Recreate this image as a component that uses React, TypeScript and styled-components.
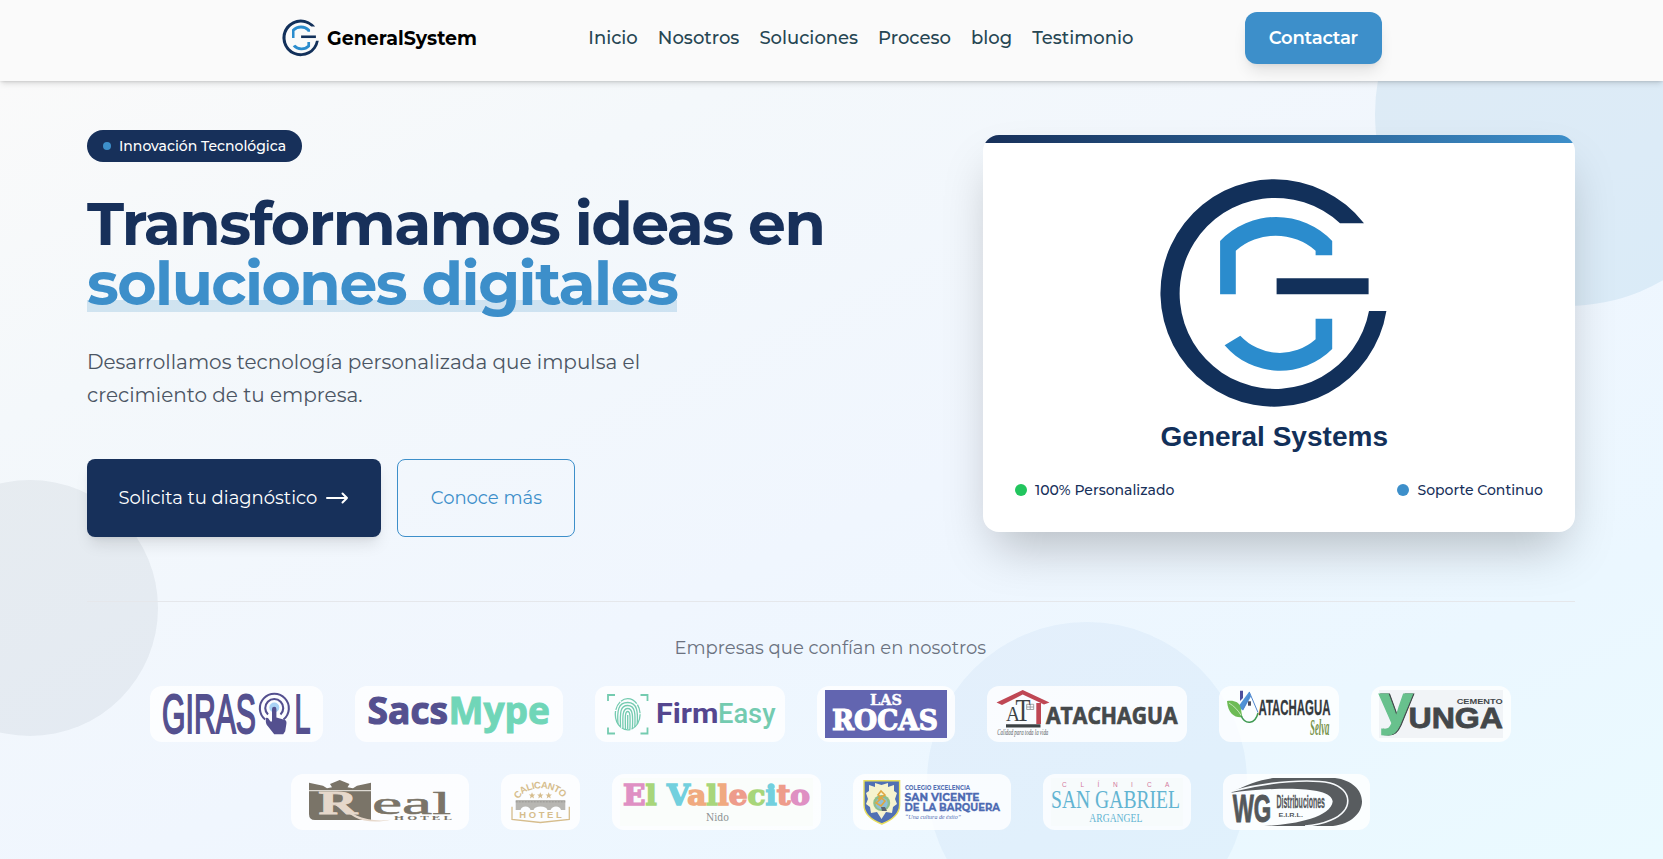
import React from 'react';
import styled, { createGlobalStyle } from 'styled-components';

const navy = '#17305a';
const blue = '#3d8fca';

const GlobalStyle = createGlobalStyle`
  *, *::before, *::after { box-sizing: border-box; }
  body {
    margin: 0;
    overflow: hidden;
    font-family: Montserrat, Inter, sans-serif;
    color: #000;
    background: #fafafa;
  }
  h1, p { margin: 0; }
  a { color: inherit; text-decoration: none; }
  svg { display: block; flex-shrink: 0; overflow: visible; }
`;

const Page = styled.div`
  height: 859px;
  display: flex;
  flex-direction: column;
  overflow: hidden;
`;

const Header = styled.header`
  position: relative;
  z-index: 2;
  height: 81px;
  padding: 12px 0 17px;
  display: flex;
  justify-content: center;
  background: #fafafa;
  box-shadow: 0 4px 6px -1px rgba(0, 0, 0, 0.1), 0 2px 4px -2px rgba(0, 0, 0, 0.1),
    0 1px 2px rgba(0, 0, 0, 0.06);
`;

const HeaderInner = styled.div`
  width: 1101px;
  display: flex;
  align-items: center;
  justify-content: space-between;
`;

const Brand = styled.a`
  display: flex;
  align-items: center;
  gap: 7px;
  padding-left: 1px;
  font-size: 19px;
  font-weight: 700;
`;

const Nav = styled.nav`
  display: flex;
  gap: 20px;
  font-size: 18px;
  font-weight: 500;
  color: #264653;
`;

const ContactButton = styled.a`
  height: 52px;
  padding: 0 24px;
  display: flex;
  align-items: center;
  border-radius: 12px;
  background: ${blue};
  color: #fff;
  font-size: 18px;
  font-weight: 600;
  letter-spacing: -0.2px;
  box-shadow: 0 10px 15px -3px rgba(0, 0, 0, 0.1), 0 4px 6px -4px rgba(0, 0, 0, 0.1);
`;

const Hero = styled.main`
  position: relative;
  z-index: 0;
  flex: 1;
  overflow: hidden;
  padding: 49px 88px 0 87px;
  background: linear-gradient(to bottom right, #fafafa, #f4f8fb 22%, #f0f6fe 54%, #ebf7ff 80%, #eafaff);
`;

const Bubble = styled.span<{ $size: number; $x: number; $y: number; $tint: string }>`
  position: absolute;
  z-index: -2;
  left: ${(p) => p.$x}px;
  top: ${(p) => p.$y}px;
  width: ${(p) => p.$size}px;
  height: ${(p) => p.$size}px;
  border-radius: 50%;
  background: ${(p) => p.$tint};
`;

const Intro = styled.section`
  display: flex;
  align-items: center;
  justify-content: space-between;
`;

const Pitch = styled.div`
  display: flex;
  flex-direction: column;
  align-items: flex-start;
`;

const Badge = styled.div`
  height: 32px;
  padding: 0 16px;
  display: flex;
  align-items: center;
  gap: 8px;
  border-radius: 16px;
  background: ${navy};
  color: #fff;
  font-size: 14px;
  font-weight: 500;
`;

const Dot = styled.span<{ $size: number; $color: string }>`
  width: ${(p) => p.$size}px;
  height: ${(p) => p.$size}px;
  border-radius: 50%;
  background: ${(p) => p.$color};
`;

const Title = styled.h1`
  margin-top: 32px;
  font-size: 60px;
  line-height: 60px;
  font-weight: 700;
  letter-spacing: -0.0255em;
  color: ${navy};
`;

const Highlight = styled.span`
  position: relative;
  color: ${blue};

  &::after {
    content: '';
    position: absolute;
    z-index: -1;
    left: 0;
    right: 0;
    bottom: 8px;
    height: 12px;
    background: rgba(61, 143, 202, 0.2);
  }
`;

const Lead = styled.p`
  width: 576px;
  margin-top: 32px;
  font-size: 20px;
  line-height: 32.5px;
  color: #4b5563;
`;

const Actions = styled.div`
  display: flex;
  gap: 16px;
  margin-top: 48px;
`;

const Action = styled.a<{ $primary?: boolean }>`
  height: 78px;
  padding: ${(p) => (p.$primary ? '0 31.5px' : '0 32px 0 33px')};
  display: flex;
  align-items: center;
  gap: 8px;
  border: ${(p) => (p.$primary ? 'none' : `1px solid ${blue}`)};
  border-radius: 8px;
  background: ${(p) => (p.$primary ? navy : 'transparent')};
  color: ${(p) => (p.$primary ? '#fff' : blue)};
  font-size: 18px;
  box-shadow: ${(p) =>
    p.$primary
      ? '0 10px 15px -3px rgba(0, 0, 0, 0.1), 0 4px 6px -4px rgba(0, 0, 0, 0.1)'
      : 'none'};
`;

const Card = styled.div`
  width: 592px;
  height: 397px;
  overflow: hidden;
  border-radius: 16px;
  background: #fff;
  box-shadow: 0 25px 50px -12px rgba(0, 0, 0, 0.25);
`;

const CardStripe = styled.div`
  height: 8px;
  background: linear-gradient(to right, ${navy}, ${blue});
`;

const CardBody = styled.div`
  padding: 24px 32px 32px;
  display: flex;
  flex-direction: column;
  align-items: center;
  gap: 24px;
`;

const Perks = styled.div`
  align-self: stretch;
  display: flex;
  justify-content: space-between;
`;

const Perk = styled.div`
  height: 20px;
  display: flex;
  align-items: center;
  gap: 8px;
  font-size: 14px;
  font-weight: 500;
  color: ${navy};
`;

const Clients = styled.section`
  margin-top: 64px;
  padding: 32px 1.5px 0 0;
  border-top: 1px solid #e5e7eb;
`;

const ClientsTitle = styled.p`
  font-size: 18px;
  line-height: 28px;
  text-align: center;
  color: #6b7280;
`;

const LogoRows = styled.div`
  margin-top: 24px;
  display: flex;
  flex-direction: column;
  gap: 32px;
`;

const LogoRow = styled.div`
  display: flex;
  justify-content: center;
  gap: 32px;
`;

const LogoTile = styled.div<{ $width: number }>`
  width: ${(p) => p.$width}px;
  height: 56px;
  padding: 4px 8px;
  border-radius: 12px;
  background: rgba(255, 255, 255, 0.8);
`;

const sans = "'Liberation Sans', sans-serif";
const serif = "'Liberation Serif', serif";
const slab = "'DejaVu Serif', serif";

type WordProps = {
  x: number;
  y: number;
  w: number;
  size: number;
  fill: string;
  font?: string;
  weight?: number;
  italic?: boolean;
  stroke?: number;
  children: React.ReactNode;
};

function Word({ x, y, w, size, fill, font = sans, weight = 700, italic, stroke = 0, children }: WordProps) {
  return (
    <text
      x={x}
      y={y}
      textLength={w}
      lengthAdjust="spacingAndGlyphs"
      fontFamily={font}
      fontSize={size}
      fontWeight={weight}
      fontStyle={italic ? 'italic' : 'normal'}
      fill={fill}
      stroke={stroke ? fill : 'none'}
      strokeWidth={stroke}
    >
      {children}
    </text>
  );
}

function Emblem() {
  return (
    <>
      <g fill="#12305a">
        <path d="M205 56.3A113.7 113.7 0 1 0 227.4 144H210A95.5 95.5 0 1 1 181 56.3Z" />
        <path d="M117.6 111.3h92v16h-92z" />
      </g>
      <g fill="#2b8ccd">
        <path d="M61.1 127.3V74A77.3 77.3 0 0 1 173.2 74V88.3H156.6V83.7A60.6 60.6 0 0 0 76.8 83.7V127.3Z" />
        <path d="M65.6 178.3L81.3 168.7A54 54 0 0 0 156.6 172.3V151.7H173.2V182A73.3 73.3 0 0 1 65.6 178.3Z" />
      </g>
    </>
  );
}

function Fingerprint() {
  return (
    <g fill="none" stroke="#74cbb0">
      <path strokeWidth="1.8" d="M5 11V5h7M37.5 5h7v6M44.5 37.5v6h-7M12 43.5H5v-6" />
      <g strokeWidth="1.3">
        <ellipse cx="24.7" cy="24.3" rx="12.4" ry="15.6" strokeDasharray="18 1.2 9 1" />
        <path d="M15 34C14 21 15 12.5 24.7 12.5S35 22 34.2 34" />
        <path d="M17.5 36.5C17 23 17 15.5 24.7 15.5S32.5 24 31.8 37" />
        <path d="M20 38C19.5 26 19.5 18.5 24.7 18.5S30 26 29.4 38.5" />
        <path d="M22.5 39C22.2 28 21.8 21.5 24.7 21.5S27.2 28 26.9 39.5M24.7 25v14" />
      </g>
    </g>
  );
}

const star = 'M0-3.2L.9-1 3.2-.9 1.4.6 2 2.9 0 1.6-2 2.9-1.4.6-3.2-.9-.9-1Z';

const firstRow: { width: number; art: React.ReactNode }[] = [
  {
    width: 173,
    art: (
      <>
        <Word x={4} y={43.2} w={94} size={55.5} weight={400} fill="#54508f" stroke={2}>GIRAS</Word>
        <Word x={136.5} y={43.2} w={16} size={55.5} weight={400} fill="#54508f" stroke={2}>L</Word>
        <circle cx="116.3" cy="17.5" r="5" fill="#a9d3f5" />
        <g fill="none" stroke="#54508f" strokeWidth="2.1">
          <path d="M107.2 29.5A14.5 14.5 0 1 1 125.5 29.5" />
          <path d="M110 24.500A9 9 0 1 1 122.5 24.5" />
        </g>
        <path
          fill="#54508f"
          d="M114 19a2.2 2.2 0 0 1 4.4 0v8.5l8 2.2c1.800.6 2.3 2 2 4l-1.2 7.500-2 3h-9l-7.5-9.5c-1.2-2-1-5-.7-7l2 .3 2.5 3.5H114z"
        />
      </>
    ),
  },
  {
    width: 208,
    art: (
      <>
        <Word x={4.5} y={34.3} w={80.5} size={38} font="'Open Sans', sans-serif" fill="#54508f" stroke={1.2}>Sacs</Word>
        <Word x={85.5} y={34.3} w={101.5} size={38} font="'Open Sans', sans-serif" fill="#70d6b8" stroke={1}>Mype</Word>
      </>
    ),
  },
  {
    width: 190,
    art: (
      <>
        <Fingerprint />
        <Word x={53} y={33.3} w={62.5} size={27} font="Roboto, sans-serif" fill="#54468f">Firm</Word>
        <Word x={115} y={33.3} w={57.5} size={27} weight={500} font="Roboto, sans-serif" fill="#74cbb0">Easy</Word>
      </>
    ),
  },
  {
    width: 138,
    art: (
      <>
        <path fill="#6265b0" d="M0 0h122v48H0z" />
        <Word x={45} y={14.7} w={32} size={15} font={slab} fill="#fff" stroke={0.4}>LAS</Word>
        <Word x={7} y={40.3} w={106} size={28} font={slab} fill="#fff" stroke={1.2}>ROCAS</Word>
      </>
    ),
  },
  {
    width: 200,
    art: (
      <>
        <path fill="#bf4754" d="M27.7 0L54.5 12.5 49 14.5 27.7 4.500 7 15 1.5 12.500Z" />
        <path fill="#bf4754" d="M41.3 13h4.7v21h-4.7z" />
        <path fill="#3c4245" d="M11 34.3h34.5v3.2H11z" />
        <path fill="none" stroke="#8b9092" strokeWidth=".8" d="M31.7 14.3h7v5.2h-7zM35.2 14.3v5.2M31.7 17h7" />
        <Word x={11} y={31} w={14} size={21} weight={400} font={serif} fill="#3c4245">A</Word>
        <Word x={20.5} y={31} w={15} size={32} weight={400} font={serif} fill="#3c4245">T</Word>
        <Word x={2.3} y={44.7} w={51} size={7.5} weight={400} italic font={serif} fill="#555a5c">Calidad para toda la vida</Word>
        <Word x={51} y={33.7} w={131.5} size={22.5} font="'Open Sans', sans-serif" fill="#45494b" stroke={0.7}>ATACHAGUA</Word>
      </>
    ),
  },
  {
    width: 120,
    art: (
      <>
        <path fill="#4d4f9c" d="M13 .7h3V8l-3 3z" />
        <path fill="#4e93d6" d="M22.3 1.5L11 17l5 3.5 8-14z" />
        <path fill="none" stroke="#4e86cf" strokeWidth="1" d="M22.3 2L31 22.5M22.500 5l-6.5 14.5" />
        <path fill="#474b5c" d="M21 11.3h3v4.4h-3z" />
        <path fill="#6dbb55" d="M0 11c7-1 12 1 13.5 6 1 4 1 7 2 10C9 28 1 25 0 11Z" />
        <path fill="none" stroke="#d9f0cf" strokeWidth=".8" d="M2 13c5 3 9 7 12.5 13" />
        <path fill="none" stroke="#3f9a52" strokeWidth="1.5" d="M14 25.5C18 35 28 35 31 23" />
        <Word x={31.5} y={25.3} w={72} size={22.5} fill="#34393d" stroke={0.3}>ATACHAGUA</Word>
        <Word x={83} y={45} w={19.5} size={23} italic font={serif} fill="#76924a">Selva</Word>
      </>
    ),
  },
  {
    width: 140,
    art: (
      <>
        <path fill="#f1f4f7" d="M0 0h124v48H0z" />
        <Word x={1.2} y={33.3} w={34} size={55} fill="#3f4447" stroke={0.8}>y</Word>
        <Word x={-0.3} y={33} w={34} size={55} fill="#68c18d" stroke={1.2}>y</Word>
        <Word x={29.5} y={37.7} w={94.5} size={29} fill="#43474a" stroke={0.8}>UNGA</Word>
        <Word x={77.7} y={14.3} w={46} size={7.5} fill="#43474a">CEMENTO</Word>
      </>
    ),
  },
];

const vallecito: [string, string][] = [
  ['E', '#df90c3'],
  ['l', '#a8d67a'],
  [' V', '#72d0de'],
  ['a', '#f0aa80'],
  ['l', '#a8d67a'],
  ['l', '#f0aa80'],
  ['e', '#ee9c8b'],
  ['c', '#a8d67a'],
  ['i', '#72d0de'],
  ['t', '#ee9c8b'],
  ['o', '#df90c3'],
];

const secondRow: { width: number; art: React.ReactNode }[] = [
  {
    width: 178,
    art: (
      <>
        <path
          fill="#7a7468"
          d="M10 4.7l14 3 4 2.6 5-1-2-3.3 9.7-4L50.5 6l-2 3.3 5.5 1 4-2.6 14-3V42H16q-6 0-6-6Z"
        />
        <path stroke="#f4f1ec" strokeWidth="1" d="M10 12.7h62" />
        <Word x={19.5} y={36.3} w={39} size={33} font={serif} fill="#e6d8cb" stroke={0.8}>R</Word>
        <path fill="#e6d8cb" d="M42 27c8 8 20 15 40 15.5l10-.8c-12 2.8-27 2.5-36-2.5L36 27z" />
        <Word x={73} y={36.3} w={79} size={31} weight={400} font={serif} fill="#7a7468" stroke={0.5}>eal</Word>
        <Word x={95} y={41.6} w={58} size={5.8} font={serif} fill="#7a7468">H O T E L</Word>
      </>
    ),
  },
  {
    width: 79,
    art: (
      <>
        <path id="calicanto-arc" fill="none" d="M9.5 21.5C17 6.5 46 6.500 54.500 21.500" />
        <text fontFamily={sans} fontSize="9.500" fontWeight="700" fill="#d6bd8d">
          <textPath href="#calicanto-arc" textLength="51">CALICANTO</textPath>
        </text>
        <g fill="#d6bd8d">
          <path transform="translate(23 17.5)" d={star} />
          <path transform="translate(31.3 17.5)" d={star} />
          <path transform="translate(39.7 17.5)" d={star} />
        </g>
        <path
          fill="#b7b6b2"
          d="M6.7 22h49.6v10H52q-1-3.5-5-3.5T41.5 32h-3q-1-3.5-7-3.5T24.5 32h-3q-1-3.5-5-3.5T11.5 32H6.7z"
        />
        <path stroke="#8f8e8a" strokeWidth=".8" strokeDasharray="2 1" d="M6.7 23.8h49.6" />
        <Word x={10.3} y={39.7} w={42.5} size={9} fill="#d6bd8d">H O T E L</Word>
        <path fill="none" stroke="#d6bd8d" strokeWidth="1.3" d="M3 28.7V41.5L31.3 44.5 60.3 41.5V28.7" />
      </>
    ),
  },
  {
    width: 209,
    art: (
      <>
        <path fill="#fafdfb" d="M0 0h193v48H0z" />
        <text
          x="3"
          y="27"
          textLength="187"
          lengthAdjust="spacingAndGlyphs"
          fontFamily={slab}
          fontSize="28"
          fontWeight="700"
        >
          {vallecito.map(([letter, color], i) => (
            <tspan key={i} fill={color} stroke={color} strokeWidth="1.5">
              {letter}
            </tspan>
          ))}
        </text>
        <Word x={86} y={43} w={23} size={11} weight={400} font={slab} fill="#8d9293">Nido</Word>
      </>
    ),
  },
  {
    width: 158,
    art: (
      <>
        <path
          fill="#5070b4"
          stroke="#e8de5c"
          strokeWidth="1.4"
          d="M3 2.7h35.6V27q0 12-17.8 19Q3 39 3 27Z"
        />
        <path
          fill="#f6f3cf"
          d="M14 5l6.5 2L27 5v4l6-2v6l3 2-2 6 2 5-4 3-1 6-6-1-4.500 7-4.500-7-6 1-1-6-4-3 2-5-2-6 3-2V7l6 2z"
        />
        <ellipse cx="20.7" cy="25" rx="8.5" ry="8" fill="#8fbf8b" />
        <circle cx="20.7" cy="25.5" r="6" fill="#8fbfd8" />
        <path fill="none" stroke="#dfa741" strokeWidth="1.6" d="M17 21l7-4-4-4-3 4 7 6-4 5-5-3 6-5" />
        <path fill="#5b6470" d="M20 29h4l2 4h-5z" />
        <Word x={44} y={12.3} w={65} size={6.2} font="Montserrat, Inter, sans-serif" fill="#5570b4">COLEGIO EXCELENCIA</Word>
        <Word x={43.5} y={22.7} w={75} size={11.2} font="Montserrat, Inter, sans-serif" fill="#4d6ab2" stroke={0.3}>SAN VICENTE</Word>
        <Word x={43.5} y={33} w={95.5} size={11.2} font="Montserrat, Inter, sans-serif" fill="#4d6ab2" stroke={0.3}>DE LA BARQUERA</Word>
        <Word x={44} y={40.7} w={56} size={6.8} weight={400} italic font={serif} fill="#4d6ab2">“Una cultura de éxito”</Word>
      </>
    ),
  },
  {
    width: 148,
    art: (
      <>
        <path fill="#f7fbfc" d="M0 0h132v48H0z" />
        <text x="11 29.5 46.5 62 80 96 114" y="9" fontFamily={sans} fontSize="6.5" fill="#d3789c">CLÍNICA</text>
        <Word x={0} y={30.3} w={129} size={25} weight={400} font={serif} fill="#62b4d2">SAN GABRIEL</Word>
        <Word x={38.3} y={44} w={53} size={12} weight={400} font={serif} fill="#62b4d2">ARGANGEL</Word>
      </>
    ),
  },
  {
    width: 147,
    art: (
      <>
        <path
          fill="#585c5f"
          d="M0 14.7C14 7 28 2 42 0H104C121 2 131 12 131 23.5S120 46 102 48H33C60 47 100 40 101.7 23.5 101 9 55 8 0 14.7Z"
        />
        <path fill="none" stroke="#f8fbfd" strokeWidth="1.6" d="M2 13C40 3 80 1 99 5 122 11 123 33 100 42 92 45.5 82 47.5 74 48" />
        <Word x={1.7} y={43.7} w={38.5} size={38.5} fill="#54585b" stroke={1}>WG</Word>
        <Word x={45.5} y={30.3} w={48.5} size={19} fill="#54585b" stroke={0.3}>Distribuciones</Word>
        <Word x={47.5} y={38.7} w={24.5} size={5.4} fill="#54585b">E.I.R.L.</Word>
      </>
    ),
  },
];

const links = ['Inicio', 'Nosotros', 'Soluciones', 'Proceso', 'blog', 'Testimonio'];

export default function App() {
  return (
    <Page>
      <GlobalStyle />
      <Header>
        <HeaderInner>
          <Brand href="#">
            <svg width="38" height="38" viewBox="-1 9 236 236">
              <Emblem />
            </svg>
            GeneralSystem
          </Brand>
          <Nav>
            {links.map((link) => (
              <a key={link} href="#">{link}</a>
            ))}
          </Nav>
          <ContactButton href="#">Contactar</ContactButton>
        </HeaderInner>
      </Header>
      <Hero>
        <Bubble $size={384} $x={1375} $y={-159} $tint="rgba(61, 143, 190, 0.11)" />
        <Bubble $size={256} $x={-98} $y={399} $tint="rgba(23, 40, 60, 0.055)" />
        <Bubble $size={320} $x={927} $y={541} $tint="rgba(61, 143, 202, 0.06)" />
        <Intro>
          <Pitch>
            <Badge>
              <Dot $size={8} $color={blue} />
              Innovación Tecnológica
            </Badge>
            <Title>
              Transformamos ideas en
              <br />
              <Highlight>soluciones digitales</Highlight>
            </Title>
            <Lead>Desarrollamos tecnología personalizada que impulsa el crecimiento de tu empresa.</Lead>
            <Actions>
              <Action href="#" $primary>
                Solicita tu diagnóstico
                <svg width="24" height="24" viewBox="0 0 24 24" fill="none" stroke="#fff" strokeWidth="2" strokeLinecap="round" strokeLinejoin="round">
                  <path d="M2 12h20M17.500 7.500L22 12l-4.500 4.500" />
                </svg>
              </Action>
              <Action href="#">Conoce más</Action>
            </Actions>
          </Pitch>
          <Card>
            <CardStripe />
            <CardBody>
              <svg width="240" height="289" viewBox="0 0 240 289">
                <Emblem />
                <Word x={1.5} y={278.7} w={227.5} size={28} fill="#12305a">General Systems</Word>
              </svg>
              <Perks>
                <Perk>
                  <Dot $size={12} $color="#22c55e" />
                  100% Personalizado
                </Perk>
                <Perk>
                  <Dot $size={12} $color={blue} />
                  Soporte Continuo
                </Perk>
              </Perks>
            </CardBody>
          </Card>
        </Intro>
        <Clients>
          <ClientsTitle>Empresas que confían en nosotros</ClientsTitle>
          <LogoRows>
            {[firstRow, secondRow].map((row, i) => (
              <LogoRow key={i}>
                {row.map(({ width, art }, j) => (
                  <LogoTile key={j} $width={width}>
                    <svg width={width - 16} height="48" viewBox={`0 0 ${width - 16} 48`}>
                      {art}
                    </svg>
                  </LogoTile>
                ))}
              </LogoRow>
            ))}
          </LogoRows>
        </Clients>
      </Hero>
    </Page>
  );
}
